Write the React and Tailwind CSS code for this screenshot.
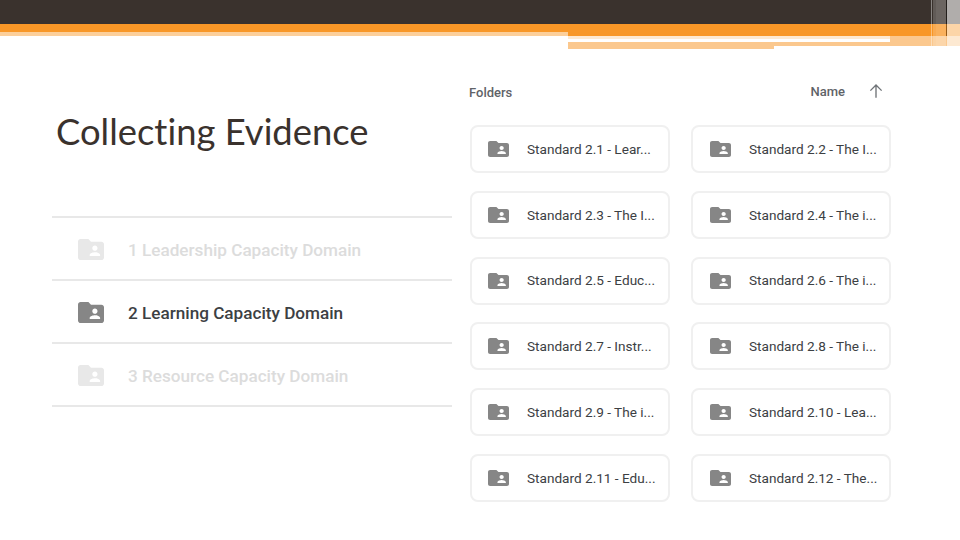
import React from 'react';

const domains = [
    { label: '1 Leadership Capacity Domain', faded: true },
    { label: '2 Learning Capacity Domain', faded: false },
    { label: '3 Resource Capacity Domain', faded: true },
];

const folders = [
    'Standard 2.1 - Lear...', 'Standard 2.2 - The I...',
    'Standard 2.3 - The I...', 'Standard 2.4 - The i...',
    'Standard 2.5 - Educ...', 'Standard 2.6 - The i...',
    'Standard 2.7 - Instr...', 'Standard 2.8 - The i...',
    'Standard 2.9 - The i...', 'Standard 2.10 - Lea...',
    'Standard 2.11 - Edu...', 'Standard 2.12 - The...',
];

// Shared folder glyph from the file listing
function SharedFolder({ className }) {
    return (
        <svg viewBox="2 4 20 16" preserveAspectRatio="none" className={className} fill="currentColor">
            <path d="M20 6h-8l-2-2H4c-1.1 0-2 .9-2 2v12c0 1.1.9 2 2 2h16c1.1 0 2-.9 2-2V8c0-1.1-.9-2-2-2zm-5 3c1.1 0 2 .9 2 2s-.9 2-2 2-2-.9-2-2 .9-2 2-2zm4 8h-8v-1c0-1.33 2.67-2 4-2s4 .67 4 2v1z" />
        </svg>
    );
}

function Header() {
    return (
        <div className="relative h-[49px] shrink-0">
            <div className="h-6 bg-[#3a322d]" />
            <div className="flex">
                <div className="w-[568px]">
                    <div className="h-2 bg-[#f89727]" />
                    <div className="h-1 bg-[#fccf9a]" />
                </div>
                <div className="flex-1">
                    <div className="h-3 bg-[#f89727]" />
                    <div className="h-[3px] w-[322px] bg-[#fee9d0]" />
                    <div className="h-[3px] w-[322px] bg-white" />
                    <div className="flex h-[7px]">
                        <div className="w-[206px] bg-[#fbc88e]" />
                        <div className="h-1 flex-1 bg-[#fbc88e]" />
                    </div>
                </div>
            </div>
            {/* light strip that runs on past the white line at the right */}
            <div className="absolute left-[890px] top-9 h-[10px] w-[70px] bg-[#fbc88e]" />
            {/* translucent vertical bars over the corner */}
            <div className="absolute left-[931px] top-0 h-12 w-px bg-white/40" />
            <div className="absolute left-[933px] top-0 h-12 w-[3px] bg-white/20" />
            <div className="absolute left-[936px] top-0 h-12 w-[10px] bg-white/25" />
            <div className="absolute left-[946px] top-0 h-9 w-px bg-black/40" />
            <div className="absolute left-[947px] top-0 h-12 w-[13px] bg-white/60" />
        </div>
    );
}

export default function App() {
    return (
        <div className="flex h-[540px] w-[960px] flex-col overflow-hidden bg-white font-['Roboto',sans-serif]">
            <Header />
            <div className="flex flex-1 pl-[52px]">
                <div className="w-[400px]">
                    <h1 className="mt-[59px] pl-1 font-['Lato',sans-serif] text-[36.4px] leading-[46px] text-[#3a322d] [font-variant-ligatures:none]">
                        Collecting Evidence
                    </h1>
                    <div className="mt-[62px] border-t-2 border-[#e8e8e8]">
                        {domains.map((d) => (
                            <div
                                key={d.label}
                                className={`flex h-[63px] items-center border-b-2 border-[#e8e8e8] pl-[26px] ${d.faded ? 'text-[#dcdcdc]' : 'text-[#3c4043]'}`}
                            >
                                <SharedFolder className={`mt-0.5 h-[21px] w-[26px] ${d.faded ? 'text-[#e8e8e8]' : 'text-[#868686]'}`} />
                                <span className="ml-6 pt-1 text-[17.15px] font-medium">{d.label}</span>
                            </div>
                        ))}
                    </div>
                </div>
                <div className="ml-[18px] w-[421px]">
                    <div className="mt-[33px] flex h-5 items-center justify-between pr-[6px] text-[13px] font-medium text-[#5f6368]">
                        <span className="-ml-px pt-0.5">Folders</span>
                        <span className="flex items-center gap-[22px]">
                            Name
                            <svg viewBox="0 0 24 24" className="-mt-0.5 h-[18px] w-[18px] text-[#6f7377]" fill="none" stroke="currentColor" strokeWidth="1.8">
                                <path d="M12 21V4M4.5 11.5 12 4l7.5 7.5" />
                            </svg>
                        </span>
                    </div>
                    <div className="mt-[23px] grid grid-cols-2 gap-x-[21px] gap-y-[17.8px]">
                        {folders.map((name) => (
                            <div
                                key={name}
                                className="flex h-[48px] items-center rounded-lg border-2 border-[#f0f0f0] text-[13.6px] text-[#3c4043] odd:pl-4 even:pl-[17px]"
                            >
                                <SharedFolder className="h-[16px] w-[21px] shrink-0 text-[#868686]" />
                                <span className="ml-[18px] whitespace-nowrap">{name}</span>
                            </div>
                        ))}
                    </div>
                </div>
            </div>
        </div>
    );
}
